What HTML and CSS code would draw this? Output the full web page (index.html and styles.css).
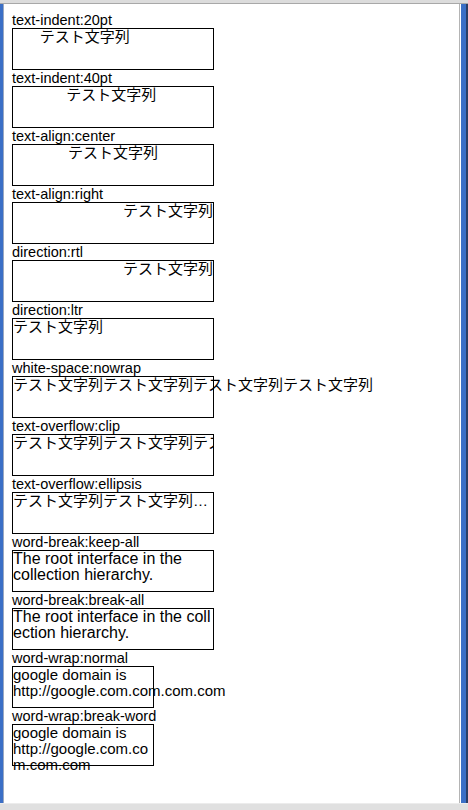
FILE: index.html
```html
<!DOCTYPE html>
<html lang="ja">
<head>
<meta charset="utf-8">
<title>CSS text sample</title>
<link rel="stylesheet" href="styles.css">
</head>
<body>
<div class="window">
  <div class="topbar"></div>
  <div class="middle">
    <div class="leftbar"></div>
    <div class="content">
      <div class="label">text-indent:20pt</div>
      <div class="box indent20">テスト文字列</div>
      <div class="label">text-indent:40pt</div>
      <div class="box indent40">テスト文字列</div>
      <div class="label">text-align:center</div>
      <div class="box center">テスト文字列</div>
      <div class="label">text-align:right</div>
      <div class="box right">テスト文字列</div>
      <div class="label">direction:rtl</div>
      <div class="box rtl">テスト文字列</div>
      <div class="label">direction:ltr</div>
      <div class="box ltr">テスト文字列</div>
      <div class="label">white-space:nowrap</div>
      <div class="box nowrap">テスト文字列テスト文字列テスト文字列テスト文字列</div>
      <div class="label">text-overflow:clip</div>
      <div class="box clip">テスト文字列テスト文字列テスト文字列テスト文字列</div>
      <div class="label">text-overflow:ellipsis</div>
      <div class="box ellipsis">テスト文字列テスト文字列テスト文字列テスト文字列</div>
      <div class="label">word-break:keep-all</div>
      <div class="box latin keepall">The root interface in the collection hierarchy.</div>
      <div class="label">word-break:break-all</div>
      <div class="box latin breakall">The root interface in the collection hierarchy.</div>
      <div class="label">word-wrap:normal</div>
      <div class="box latin narrow wrapnormal">google domain is http://google.com.com.com.com</div>
      <div class="label">word-wrap:break-word</div>
      <div class="box latin narrow breakword">google domain is http://google.com.com.com.com</div>
    </div>
    <div class="rightframe">
      <div class="rline"></div>
      <div class="rgap"></div>
      <div class="rblue"></div>
      <div class="rdark"></div>
    </div>
  </div>
  <div class="bottombar"></div>
</div>
</body>
</html>
```

FILE: styles.css
```css
html, body {
  margin: 0;
  padding: 0;
  background: #ffffff;
}
body {
  font-family: "Liberation Sans", "Noto Sans CJK JP", sans-serif;
  font-size: 15px;
  line-height: 16px;
  color: #000000;
}
.window {
  width: 468px;
  height: 810px;
  display: flex;
  flex-direction: column;
  overflow: hidden;
}
.topbar {
  height: 3px;
  background: #dcdcdc;
  border-bottom: 1px solid #a8a8a8;
  flex: none;
}
.middle {
  flex: 1;
  display: flex;
  min-height: 0;
}
.leftbar {
  width: 3px;
  flex: none;
  background: #3b6fc6;
  border-right: 1px solid #9aa8c0;
}
.content {
  flex: 1;
  padding: 8px;
  min-width: 0;
  background: #ffffff;
}
.rightframe {
  flex: none;
  display: flex;
}
.rline { width: 1px; background: #b4b4b4; }
.rgap { width: 1px; background: #ffffff; }
.rblue { width: 5px; background: #3b6fc6; }
.rdark { width: 2px; background: #2b3f66; }
.bottombar {
  height: 6px;
  flex: none;
  background: #e0e0e0;
  border-top: 1px solid #ececec;
}
.label {
  height: 16px;
  font-size: 14.5px;
  white-space: nowrap;
}
.box {
  width: 200px;
  height: 40px;
  border: 1px solid #000000;
}
.indent20 { text-indent: 20pt; }
.indent40 { text-indent: 40pt; }
.center { text-align: center; }
.right { text-align: right; }
.rtl { direction: rtl; }
.ltr { direction: ltr; }
.nowrap { white-space: nowrap; }
.clip {
  white-space: nowrap;
  overflow: hidden;
  text-overflow: clip;
}
.ellipsis {
  white-space: nowrap;
  overflow: hidden;
  text-overflow: ellipsis;
}
.latin { font-size: 16px; }
.keepall { word-break: keep-all; }
.breakall { word-break: break-all; }
.narrow { width: 140px; font-size: 15px; }
.wrapnormal { overflow-wrap: normal; word-wrap: normal; }
.breakword { overflow-wrap: break-word; word-wrap: break-word; }
```
